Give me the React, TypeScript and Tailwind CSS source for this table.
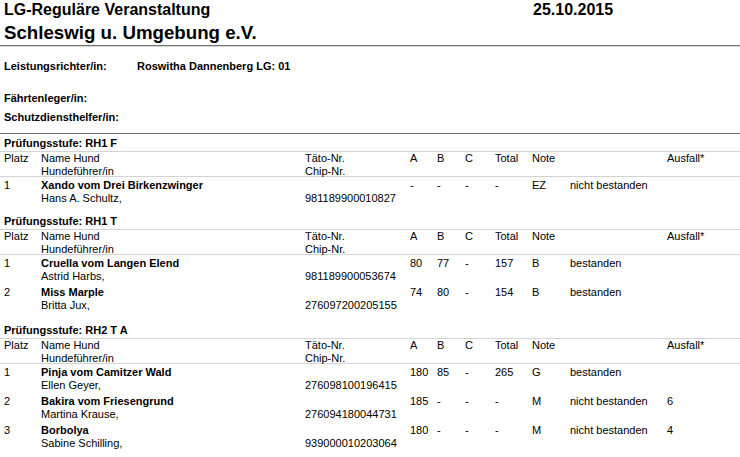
import React from 'react'

type Entry = {
  platz: string
  hund: string
  fuehrer: string
  chip: string
  a: string
  b: string
  c: string
  total: string
  note: string
  status: string
  ausfall: string
}

type Section = { stufe: string; titleH: string; entries: Entry[] }

const sections: Section[] = [
  {
    stufe: 'RH1 F',
    titleH: 'h-[18px]',
    entries: [
      { platz: '1', hund: 'Xando vom Drei Birkenzwinger', fuehrer: 'Hans A. Schultz,', chip: '981189900010827', a: '-', b: '-', c: '-', total: '-', note: 'EZ', status: 'nicht bestanden', ausfall: '' },
    ],
  },
  {
    stufe: 'RH1 T',
    titleH: 'h-[24px]',
    entries: [
      { platz: '1', hund: 'Cruella vom Langen Elend', fuehrer: 'Astrid Harbs,', chip: '981189900053674', a: '80', b: '77', c: '-', total: '157', note: 'B', status: 'bestanden', ausfall: '' },
      { platz: '2', hund: 'Miss Marple', fuehrer: 'Britta Jux,', chip: '276097200205155', a: '74', b: '80', c: '-', total: '154', note: 'B', status: 'bestanden', ausfall: '' },
    ],
  },
  {
    stufe: 'RH2 T A',
    titleH: 'h-[26px]',
    entries: [
      { platz: '1', hund: 'Pinja vom Camitzer Wald', fuehrer: 'Ellen Geyer,', chip: '276098100196415', a: '180', b: '85', c: '-', total: '265', note: 'G', status: 'bestanden', ausfall: '' },
      { platz: '2', hund: 'Bakira vom Friesengrund', fuehrer: 'Martina Krause,', chip: '276094180044731', a: '185', b: '-', c: '-', total: '-', note: 'M', status: 'nicht bestanden', ausfall: '6' },
      { platz: '3', hund: 'Borbolya', fuehrer: 'Sabine Schilling,', chip: '939000010203064', a: '180', b: '-', c: '-', total: '-', note: 'M', status: 'nicht bestanden', ausfall: '4' },
    ],
  },
]

const cols = 'grid grid-cols-[37px_264px_105px_27px_28px_30px_37px_38px_97px_1fr] pl-[4px]'

const HeaderRow: React.FC = () => (
  <div className={`${cols} h-[25px] border-b border-[#d4d4d4]`}>
    <div>Platz</div>
    <div>
      <div>Name Hund</div>
      <div>Hundeführer/in</div>
    </div>
    <div>
      <div>Täto-Nr.</div>
      <div>Chip-Nr.</div>
    </div>
    <div>A</div>
    <div>B</div>
    <div>C</div>
    <div>Total</div>
    <div>Note</div>
    <div></div>
    <div>Ausfall*</div>
  </div>
)

const EntryRow: React.FC<{ e: Entry }> = ({ e }) => (
  <div className={`${cols} h-[29px] pt-[2px]`}>
    <div>{e.platz}</div>
    <div>
      <div className="font-bold">{e.hund}</div>
      <div>{e.fuehrer}</div>
    </div>
    <div>
      <div>&nbsp;</div>
      <div>{e.chip}</div>
    </div>
    <div>{e.a}</div>
    <div>{e.b}</div>
    <div>{e.c}</div>
    <div>{e.total}</div>
    <div>{e.note}</div>
    <div>{e.status}</div>
    <div>{e.ausfall}</div>
  </div>
)

export default function App() {
  return (
    <div className="w-[740px] h-[457px] overflow-hidden bg-white text-black font-['Liberation_Sans',Arial,sans-serif] text-[11px] leading-[13px]">
      {/* Kopf */}
      <div className="flex pl-[4px] border-b border-[#6f6f6f] h-[46px]">
        <div className="w-[529px]">
          <div className="text-[16px] font-bold leading-[18px] pt-[1px]">LG-Reguläre Veranstaltung</div>
          <div className="text-[18.7px] font-bold leading-[22px] mt-[3px]">Schleswig u. Umgebung e.V.</div>
        </div>
        <div className="text-[16px] font-bold leading-[18px] pt-[1px]">25.10.2015</div>
      </div>
      <div className="h-px bg-[#d9d9d9]"></div>

      {/* Richter */}
      <div className="pl-[4px] pt-[13px] font-bold border-b border-[#6f6f6f] h-[87px]">
        <div className="flex">
          <div className="w-[133px]">Leistungsrichter/in:</div>
          <div>Roswitha Dannenberg LG: 01</div>
        </div>
        <div className="pt-[19px]">Fährtenleger/in:</div>
        <div className="pt-[6px]">Schutzdiensthelfer/in:</div>
      </div>

      {sections.map((s) => (
        <div key={s.stufe}>
          <div className={`flex items-end pl-[4px] pb-[1px] font-bold border-b border-[#d4d4d4] ${s.titleH}`}>
            Prüfungsstufe: {s.stufe}
          </div>
          <HeaderRow />
          {s.entries.map((e) => (
            <EntryRow key={e.hund} e={e} />
          ))}
        </div>
      ))}
    </div>
  )
}
